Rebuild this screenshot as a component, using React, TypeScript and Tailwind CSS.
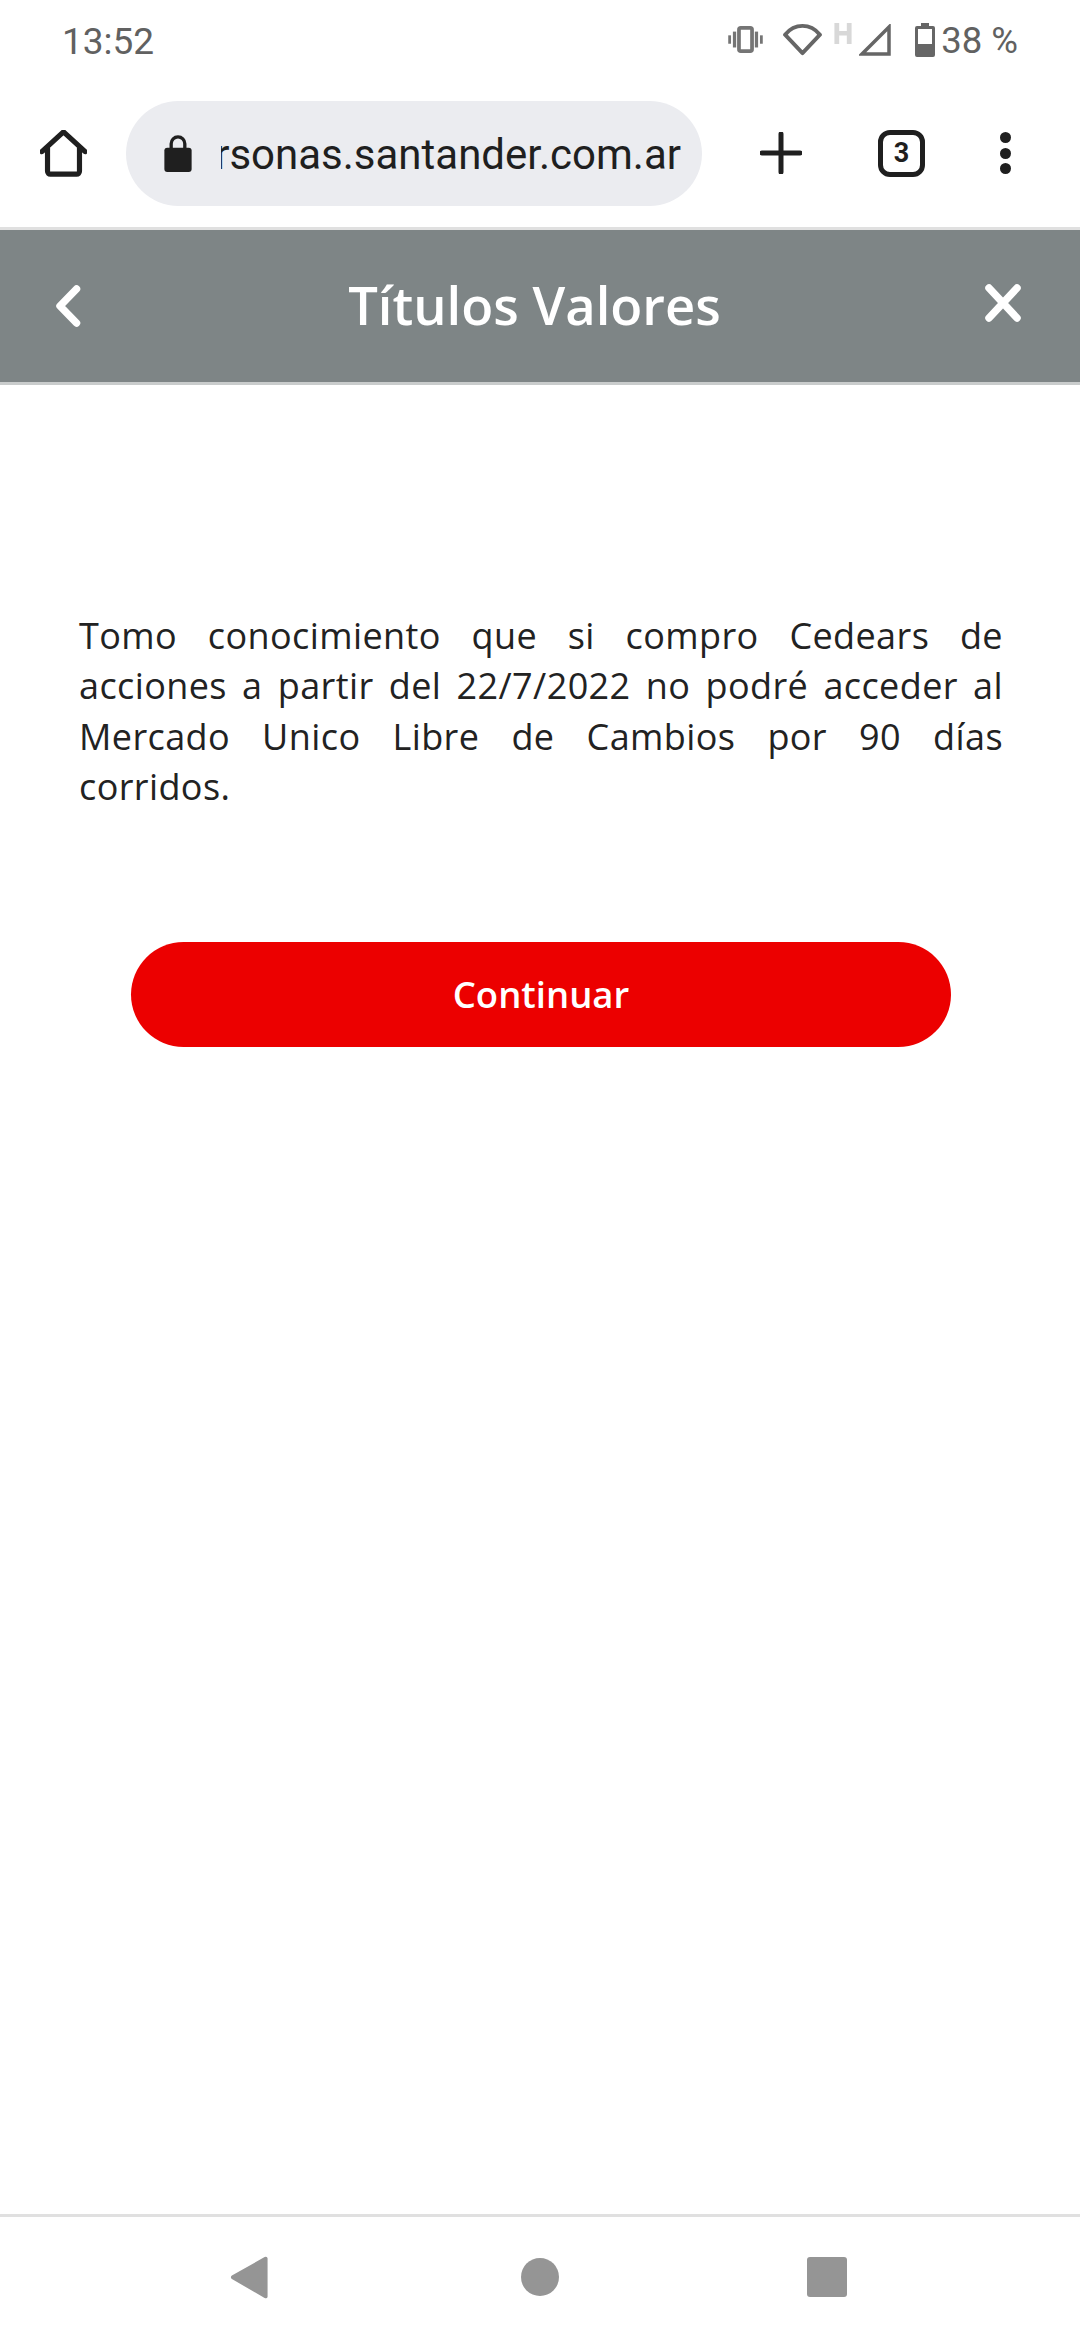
export default function App() {
  return (
    <div className="relative flex h-[2340px] w-[1080px] flex-col overflow-hidden bg-white font-['Open_Sans',sans-serif]">
      {/* Status bar */}
      <div className="flex h-[82px] items-center justify-between pl-[62px] pr-[62px] font-['Roboto',sans-serif] text-[37px] text-[#616161]">
        <span className="leading-none">13:52</span>
        <div className="flex items-center">
          <svg width="37" height="28" viewBox="0 0 38 30" className="mr-[19px] -mt-[3px]" fill="none">
            <rect x="12" y="2" width="14" height="25" rx="2" stroke="#757575" strokeWidth="4" />
            <rect x="5.5" y="6" width="3.5" height="17" fill="#757575" />
            <rect x="0.5" y="10" width="3" height="9" fill="#757575" />
            <rect x="29" y="6" width="3.5" height="17" fill="#757575" />
            <rect x="34.5" y="10" width="3" height="9" fill="#757575" />
          </svg>
          <svg width="39" height="33" viewBox="0 0 40 34" fill="none" className="mr-[12px] -mt-[4px]">
            <path d="M2 12C7 6 13 3 20 3s13 3 18 9L20 31Z" stroke="#666666" strokeWidth="4" strokeLinejoin="round" />
          </svg>
          <svg width="18" height="21" viewBox="0 0 18 22" className="-mt-[15px] mr-[7px]" fill="#d8d8d8">
            <path d="M0 0h5v8.500h8V0h5v22h-5v-9h-8v9H0Z" />
          </svg>
          <svg width="32" height="32" viewBox="0 0 32 32" fill="none" className="mr-[24px] -mt-[2px]">
            <path d="M30 3v27H3Z" stroke="#666666" strokeWidth="3.5" />
          </svg>
          <svg width="20" height="34" viewBox="0 0 20 34" className="mr-[6px] -mt-[2px]">
            <path d="M6 0h8v3h4a2 2 0 0 1 2 2v27a2 2 0 0 1-2 2H2a2 2 0 0 1-2-2V5a2 2 0 0 1 2-2h4Z" fill="#666666" />
            <rect x="3" y="6" width="14" height="15" fill="#fff" />
          </svg>
          <span className="text-[36.5px] leading-none">38 %</span>
        </div>
      </div>

      {/* Browser toolbar */}
      <div className="flex h-[145px] items-start pt-[19px]">
        <div className="flex h-[104px] w-[126px] shrink-0 items-center justify-center">
          <svg width="47" height="47" viewBox="0 0 50 50" fill="none">
            <path d="M2 23 25 2l23 21M8 19v25a3 3 0 0 0 3 3h28a3 3 0 0 0 3-3V19" stroke="#1f1f1f" strokeWidth="5.500" strokeLinecap="round" strokeLinejoin="round" />
          </svg>
        </div>
        <div className="flex h-[105px] w-[576px] shrink-0 items-center rounded-full bg-[#ebecf0] pl-[38px]">
          <svg width="28" height="37" viewBox="0 0 28 38" className="mr-[29px] shrink-0">
            <path d="M7 15V9a7 7 0 0 1 14 0v6" fill="none" stroke="#1f1f1f" strokeWidth="3.4" />
            <rect x="0" y="13" width="28" height="25" rx="3" fill="#1f1f1f" />
          </svg>
          <div className="w-[460px] overflow-hidden">
            <div className="flex justify-end whitespace-nowrap pt-[2px] font-['Roboto',sans-serif] text-[42px] leading-[50px] text-[#1f1f1f]">
              personas.santander.com.ar
            </div>
          </div>
        </div>
        <div className="flex h-[104px] w-[158px] shrink-0 items-center justify-center">
          <svg width="42" height="42" viewBox="0 0 42 42">
            <path d="M21 2v38M2 21h38" stroke="#1f1f1f" strokeWidth="5" strokeLinecap="round" />
          </svg>
        </div>
        <div className="ml-[18px] flex h-[104px] w-[47px] shrink-0 items-center justify-center">
          <div className="flex h-[47px] w-[47px] items-center justify-center rounded-[12px] border-[5px] border-[#1f1f1f] font-['Roboto',sans-serif] text-[27px] font-bold leading-none text-[#1f1f1f]">
            3
          </div>
        </div>
        <div className="ml-[75px] flex h-[104px] w-[11px] shrink-0 flex-col items-center justify-center gap-[4.5px]">
          <div className="h-[11px] w-[11px] rounded-full bg-[#1f1f1f]" />
          <div className="h-[11px] w-[11px] rounded-full bg-[#1f1f1f]" />
          <div className="h-[11px] w-[11px] rounded-full bg-[#1f1f1f]" />
        </div>
      </div>

      {/* Header */}
      <div className="flex h-[158px] shrink-0 items-center justify-between border-y-[3px] border-t-[#e0e0e0] border-b-[#c9cccc] bg-[#7e8586] bg-clip-padding pl-[54px] pr-[59px]">
        <svg width="27" height="42" viewBox="0 0 27 42" fill="none">
          <path d="M22.500 4 6 21l16.500 17" stroke="#fff" strokeWidth="7.500" strokeLinecap="round" strokeLinejoin="round" />
        </svg>
        <h1 className="ml-[3px] pb-[2px] text-[52.5px] font-semibold leading-none text-white">Títulos Valores</h1>
        <svg width="36" height="38" viewBox="0 0 36 38" fill="none" className="-mt-[6px]">
          <path d="M4 4l28 30M32 4 4 34" stroke="#fff" strokeWidth="7.500" strokeLinecap="round" />
        </svg>
      </div>

      {/* Content */}
      <div className="flex flex-1 flex-col">
        <p className="mx-[79px] mt-[226px] w-[924px] text-justify text-[36px] leading-[50.300px] tracking-[0.4px] text-[#222222]">
          Tomo conocimiento que si compro Cedears de acciones a partir del 22/7/2022 no podré acceder al Mercado Unico Libre de Cambios por 90 días corridos.
        </p>
        <button className="ml-[131px] mt-[130px] h-[105px] w-[820px] rounded-full bg-[#ec0000] text-[36.5px] font-semibold leading-none text-white">
          Continuar
        </button>
      </div>

      {/* Navigation bar */}
      <div className="flex h-[126px] shrink-0 items-center border-t-[3px] border-[#e0e0e0] bg-white pb-[3px]">
        <div className="ml-[230px] flex w-[38px] justify-center">
          <svg width="38" height="43" viewBox="0 0 38 44" fill="#959595">
            <path d="M35 1 1.500 20a2 2 0 0 0 0 3.500L35 43a2 2 0 0 0 3-2V3a2 2 0 0 0-3-2Z" />
          </svg>
        </div>
        <div className="ml-[253px] h-[38px] w-[38px] rounded-full bg-[#959595]" />
        <div className="ml-[248px] h-[40px] w-[40px] rounded-[3px] bg-[#959595]" />
      </div>
    </div>
  );
}
